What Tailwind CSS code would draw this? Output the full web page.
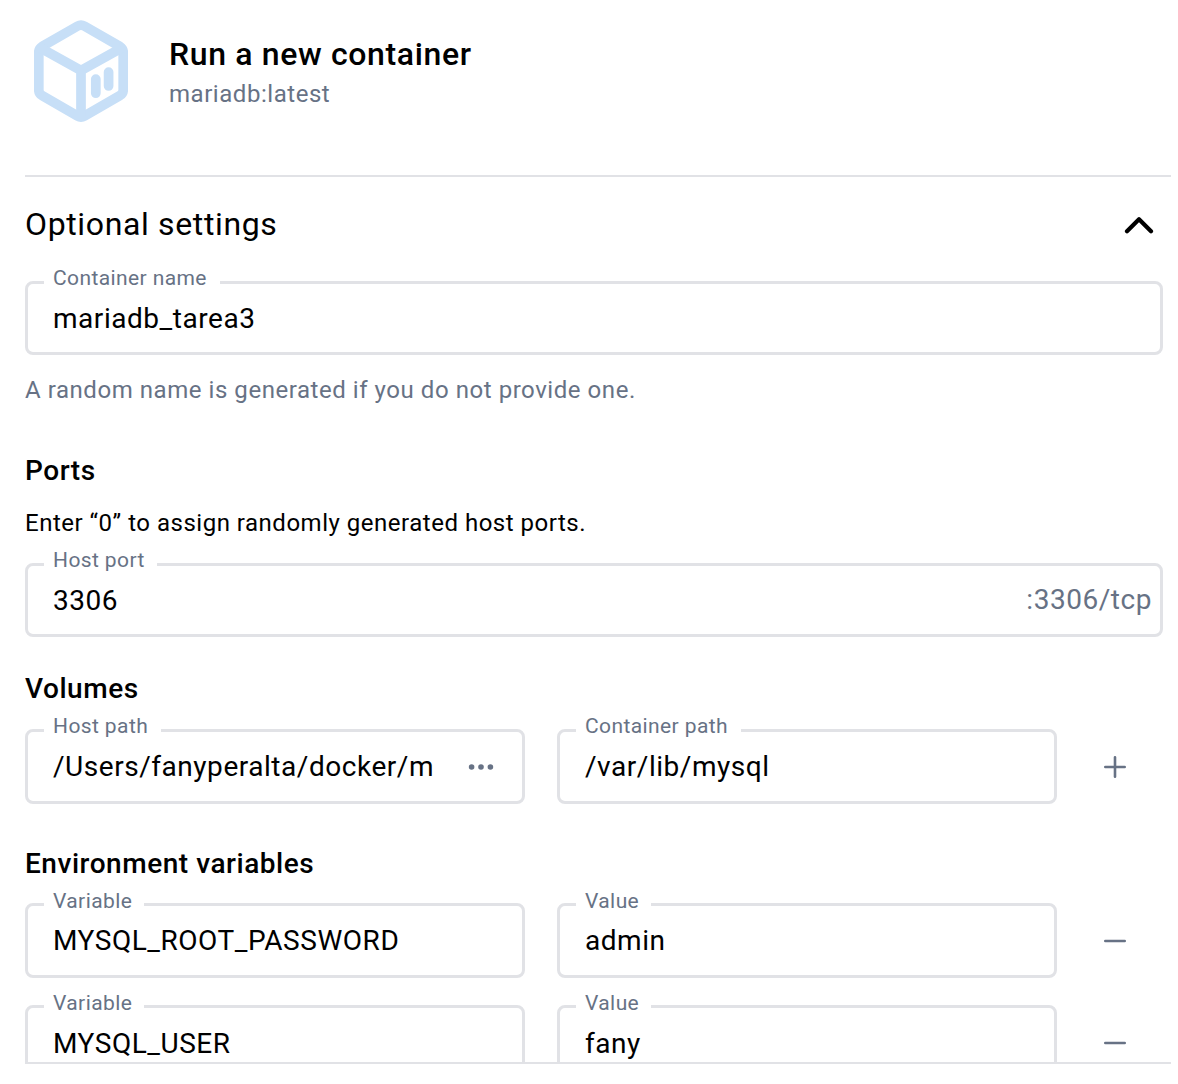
<!DOCTYPE html>
<html lang="en">
<head>
<meta charset="utf-8">
<title>Run a new container</title>
<script src="https://cdn.jsdelivr.net/npm/@tailwindcss/browser@4"></script>
</head>
<body class="w-[1178px] h-[1084px] overflow-hidden bg-white font-['Roboto',sans-serif] text-black">
<main class="ml-[25px] h-[1064px] w-[1146px] overflow-hidden flex flex-col border-b-2 border-[#e1e2e6]">
  <header class="h-[177px] shrink-0 border-b-2 border-[#e1e2e6] flex pt-5">
    <svg class="ml-[9px] w-[94px] h-[102px] shrink-0" viewBox="0 0 94 102" fill="none" stroke="#c7dff7" stroke-width="9.7" stroke-linejoin="round">
      <path d="M43.5 6.1Q47 4 50.5 6.1L86 26.5Q89.2 28.5 89.2 32V70Q89.2 73.5 86 75.5L50.5 96Q47 98 43.5 96L8 75.5Q4.8 73.5 4.8 70V32Q4.8 28.5 8 26.5Z"/>
      <path d="M6.5 28L47 50.5L87.5 28M47 50.5V96"/>
      <path d="M61.8 59.1V73.2M74.6 52.1V66" stroke-linecap="round"/>
    </svg>
    <div class="ml-[41px] pt-[14px]">
      <h1 class="text-[32px] leading-10 font-medium tracking-[0.64px]">Run a new container</h1>
      <p class="text-[24px] leading-8 mt-1 text-[#677285] tracking-[0.54px]">mariadb:latest</p>
    </div>
  </header>
  <section class="pr-2">
    <div class="h-[104px] flex items-start justify-between pt-[27px] pr-[9px]">
      <h2 class="text-[32px] leading-10 tracking-[0.64px]">Optional settings</h2>
      <svg class="w-[30px] h-[18px] mt-3" viewBox="0 0 30 18" fill="none" stroke="#000" stroke-width="4.2" stroke-linecap="round" stroke-linejoin="round"><path d="M3 15.2L15 3.2L27 15.2"/></svg>
    </div>
    <div class="relative h-[74px] rounded-lg border-3 border-[#e1e2e6] pl-[25px] pt-[15px]">
      <label class="absolute left-4 -top-[19px] w-[176px] bg-white pl-[9px] text-[21px] leading-[26px] text-[#677285] tracking-[0.4px]">Container name</label>
      <div class="text-[28px] leading-10 tracking-[0.54px]">mariadb_tarea3</div>
    </div>
    <p class="mt-[19px] text-[24px] leading-8 tracking-[0.55px] text-[#677285]">A random name is generated if you do not provide one.</p>
    <h3 class="mt-[45px] text-[28px] leading-10 font-medium tracking-[0.54px]">Ports</h3>
    <p class="mt-4 text-[24px] leading-8 tracking-[0.51px]">Enter “0” to assign randomly generated host ports.</p>
    <div class="relative mt-6 h-[74px] rounded-lg border-3 border-[#e1e2e6] pl-[25px] pr-2 pt-[15px] flex justify-between">
      <label class="absolute left-4 -top-[19px] w-[113px] bg-white pl-[9px] text-[21px] leading-[26px] text-[#677285] tracking-[0.4px]">Host port</label>
      <div class="text-[28px] leading-10 tracking-[0.54px]">3306</div>
      <div class="text-[28px] leading-10 -mt-px tracking-[0.54px] text-[#677285]">:3306/tcp</div>
    </div>
    <h3 class="mt-8 text-[28px] leading-10 font-medium tracking-[0.54px]">Volumes</h3>
    <div class="mt-5 flex">
      <div class="relative h-[75px] w-[500px] rounded-lg border-3 border-[#e1e2e6] pl-[25px] pr-7 pt-[15px] flex justify-between">
        <label class="absolute left-4 -top-[19px] w-[117px] bg-white pl-[9px] text-[21px] leading-[26px] text-[#677285] tracking-[0.4px]">Host path</label>
        <div class="text-[28px] leading-10 tracking-[0.54px]">/Users/fanyperalta/docker/m</div>
        <svg class="w-[26px] h-[6px] mt-[17px]" viewBox="0 0 26 6" fill="#677285"><circle cx="3.6" cy="3" r="2.8"/><circle cx="13" cy="3" r="2.8"/><circle cx="22.4" cy="3" r="2.8"/></svg>
      </div>
      <div class="relative ml-8 h-[75px] w-[500px] rounded-lg border-3 border-[#e1e2e6] pl-[25px] pt-[15px]">
        <label class="absolute left-4 -top-[19px] w-[165px] bg-white pl-[9px] text-[21px] leading-[26px] text-[#677285] tracking-[0.4px]">Container path</label>
        <div class="text-[28px] leading-10 tracking-[0.54px]">/var/lib/mysql</div>
      </div>
      <svg class="ml-[47px] mt-[27px] size-[22px]" viewBox="0 0 22 22" stroke="#677285" stroke-width="2.6" stroke-linecap="round"><path d="M1.3 11H20.7M11 1.3V20.7"/></svg>
    </div>
    <h3 class="mt-10 text-[28px] leading-10 font-medium tracking-[0.54px]">Environment variables</h3>
    <div class="mt-[19px] flex">
      <div class="relative h-[75px] w-[500px] rounded-lg border-3 border-[#e1e2e6] pl-[25px] pt-[15px]">
        <label class="absolute left-4 -top-[18px] w-[100px] bg-white pl-[9px] text-[21px] leading-[26px] text-[#677285] tracking-[0.4px]">Variable</label>
        <div class="text-[28px] leading-10 tracking-[0.54px]">MYSQL_ROOT_PASSWORD</div>
      </div>
      <div class="relative ml-8 h-[75px] w-[500px] rounded-lg border-3 border-[#e1e2e6] pl-[25px] pt-[15px]">
        <label class="absolute left-4 -top-[18px] w-[75px] bg-white pl-[9px] text-[21px] leading-[26px] text-[#677285] tracking-[0.4px]">Value</label>
        <div class="text-[28px] leading-10 tracking-[0.54px]">admin</div>
      </div>
      <svg class="ml-[47px] mt-[27px] size-[22px]" viewBox="0 0 22 22" stroke="#677285" stroke-width="2.6" stroke-linecap="round"><path d="M1.3 11H20.7"/></svg>
    </div>
    <div class="mt-[27px] flex">
      <div class="relative h-[75px] w-[500px] rounded-lg border-3 border-[#e1e2e6] pl-[25px] pt-4">
        <label class="absolute left-4 -top-[18px] w-[100px] bg-white pl-[9px] text-[21px] leading-[26px] text-[#677285] tracking-[0.4px]">Variable</label>
        <div class="text-[28px] leading-10 tracking-[0.54px]">MYSQL_USER</div>
      </div>
      <div class="relative ml-8 h-[75px] w-[500px] rounded-lg border-3 border-[#e1e2e6] pl-[25px] pt-4">
        <label class="absolute left-4 -top-[18px] w-[75px] bg-white pl-[9px] text-[21px] leading-[26px] text-[#677285] tracking-[0.4px]">Value</label>
        <div class="text-[28px] leading-10 tracking-[0.54px]">fany</div>
      </div>
      <svg class="ml-[47px] mt-[27px] size-[22px]" viewBox="0 0 22 22" stroke="#677285" stroke-width="2.6" stroke-linecap="round"><path d="M1.3 11H20.7"/></svg>
    </div>
  </section>
</main>
</body>
</html>
